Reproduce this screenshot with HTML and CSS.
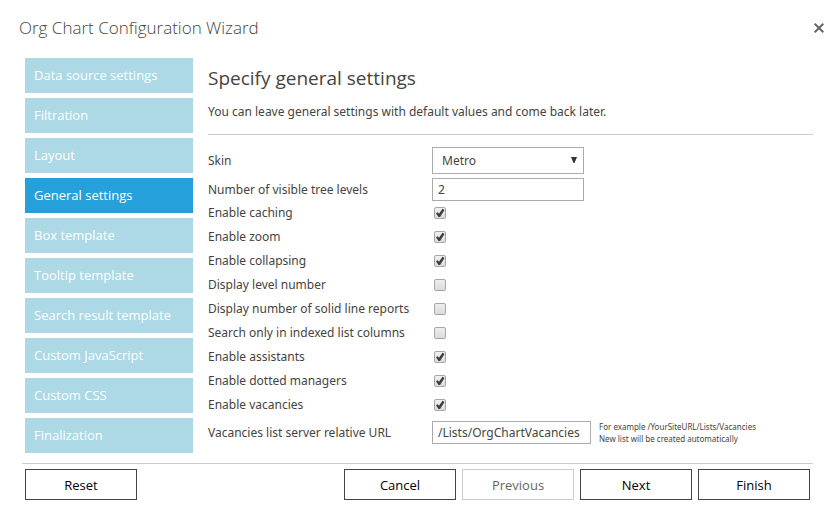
FILE: index.html
```html
<!DOCTYPE html>
<html lang="en">
<head>
<meta charset="utf-8">
<title>Org Chart Configuration Wizard</title>
<link rel="stylesheet" href="styles.css">
</head>
<body>
<form class="wizard">
  <header class="titlebar">
    <h1 class="title">Org Chart Configuration Wizard</h1>
    <button class="close" type="button" aria-label="Close">
      <svg width="10" height="10" viewBox="0 0 10 10" aria-hidden="true"><path d="M.7 .7L9.3 9.3M9.3 .7L.7 9.3" stroke="#666" stroke-width="2"/></svg>
    </button>
  </header>
  <div class="main">
    <nav class="steps">
      <a class="step" href="#">Data source settings</a>
      <a class="step" href="#">Filtration</a>
      <a class="step" href="#">Layout</a>
      <a class="step current" href="#" aria-current="step">General settings</a>
      <a class="step" href="#">Box template</a>
      <a class="step" href="#">Tooltip template</a>
      <a class="step" href="#">Search result template</a>
      <a class="step" href="#">Custom JavaScript</a>
      <a class="step" href="#">Custom CSS</a>
      <a class="step" href="#">Finalization</a>
    </nav>
    <section class="content">
      <h2 class="heading">Specify general settings</h2>
      <p class="intro">You can leave general settings with default values and come back later.</p>
      <div class="settings">
        <div class="row field-row"><label for="skin">Skin</label>
          <span class="select-wrap"><select id="skin" class="select"><option>Metro</option></select><svg class="arrow" width="6" height="7" viewBox="0 0 6 7" aria-hidden="true"><path d="M0 0H6L3.5 6H2.5Z" fill="#333"/></svg></span></div>
        <div class="row"><label for="levels">Number of visible tree levels</label><input id="levels" class="text" type="text" value="2"></div>
        <div class="row check-row"><label for="caching">Enable caching</label><input id="caching" class="check" type="checkbox" checked></div>
        <div class="row check-row"><label for="zoom">Enable zoom</label><input id="zoom" class="check" type="checkbox" checked></div>
        <div class="row check-row"><label for="collapsing">Enable collapsing</label><input id="collapsing" class="check" type="checkbox" checked></div>
        <div class="row check-row"><label for="level-number">Display level number</label><input id="level-number" class="check" type="checkbox"></div>
        <div class="row check-row"><label for="reports">Display number of solid line reports</label><input id="reports" class="check" type="checkbox"></div>
        <div class="row check-row"><label for="indexed">Search only in indexed list columns</label><input id="indexed" class="check" type="checkbox"></div>
        <div class="row check-row"><label for="assistants">Enable assistants</label><input id="assistants" class="check" type="checkbox" checked></div>
        <div class="row check-row"><label for="dotted">Enable dotted managers</label><input id="dotted" class="check" type="checkbox" checked></div>
        <div class="row check-row"><label for="vacancies">Enable vacancies</label><input id="vacancies" class="check" type="checkbox" checked></div>
        <div class="row url-row"><label for="url">Vacancies list server relative URL</label>
          <div class="url-field"><input id="url" class="text url" type="text" value="/Lists/OrgChartVacancies"><small class="hint">For example /YourSiteURL/Lists/Vacancies<br>New list will be created automatically</small></div></div>
      </div>
    </section>
  </div>
  <footer class="actions">
    <button class="button reset" type="button">Reset</button>
    <button class="button" type="button">Cancel</button>
    <button class="button" type="button" disabled>Previous</button>
    <button class="button" type="button">Next</button>
    <button class="button" type="button">Finish</button>
  </footer>
</form>
</body>
</html>
```
FILE: styles.css
```css
* { box-sizing: border-box; }
body {
  margin: 0;
  background: #fff;
  color: #444;
  font: 12px/16px "Noto Sans", "Open Sans", sans-serif;
}
.wizard { padding: 16px 13px 8px 19px; }
.titlebar {
  display: flex;
  align-items: center;
  justify-content: space-between;
  height: 24px;
}
.title { margin: 0; font: 300 17px/24px "Open Sans", "Noto Sans", sans-serif; }
.close {
  display: flex;
  padding: 0;
  border: 0;
  background: none;
}
.main {
  display: flex;
  gap: 15px;
  padding: 18px 11px 10px 6px;
}
.steps {
  display: flex;
  flex: none;
  flex-direction: column;
  gap: 5px;
  width: 168px;
}
.step {
  padding: 0 9px;
  background: #add8e6;
  color: #fff;
  font: 13px/35px "Open Sans", "Noto Sans", sans-serif;
  text-decoration: none;
  white-space: nowrap;
}
.current { background: #26a0da; }
.content { flex: 1; min-width: 0; }
.heading { margin: 8px 0 14px; font: 400 19px/24px "Open Sans", "Noto Sans", sans-serif; }
.intro { margin: 0; padding-bottom: 14px; border-bottom: 1px solid #ccc; }
.settings { padding-top: 12px; }
.row {
  display: grid;
  grid-template-columns: 224px 1fr;
  align-items: center;
}
.field-row { margin-bottom: 4px; }
.check-row { height: 24px; }
.url-row { margin-top: 4px; }
.select-wrap { position: relative; width: 152px; }
.select, .text {
  display: block;
  width: 152px;
  height: 23px;
  margin: 0;
  padding: 0 5px;
  border: 1px solid #ababab;
  border-radius: 0;
  background: #fff;
  color: #444;
  font: 12px/20px "Noto Sans", "Open Sans", sans-serif;
}
.select { height: 27px; padding: 0 9px; appearance: none; }
.arrow { position: absolute; top: 10px; right: 7px; pointer-events: none; }
.text.url { flex: none; width: 159px; }
.url-field { display: flex; align-items: center; gap: 8px; height: 23px; }
.hint { font-size: 8px; line-height: 12px; white-space: nowrap; }
.check {
  appearance: none;
  width: 12px;
  height: 12px;
  margin: 0 0 0 2px;
  border: 1px solid #a6a6a6;
  border-radius: 2px;
  background: linear-gradient(#eee, #dcdcdc);
}
.check:checked::before {
  content: "";
  display: block;
  width: 10px;
  height: 10px;
  background: #3c3c3c;
  clip-path: polygon(10% 52%, 28% 42%, 41% 57%, 75% 8%, 95% 20%, 50% 90%, 35% 90%);
}
.actions {
  display: flex;
  gap: 6px;
  margin-left: 3px;
  margin-right: 11px;
  padding: 5px 3px 0;
  border-top: 1px solid #ccc;
}
.button {
  width: 112px;
  height: 31px;
  padding: 0;
  border: 1px solid #444;
  background: #fff;
  color: #000;
  font: 13px/20px "Open Sans", "Noto Sans", sans-serif;
}
.button:disabled { border-color: #ccc; color: #666; }
.reset { margin-right: auto; }
```
